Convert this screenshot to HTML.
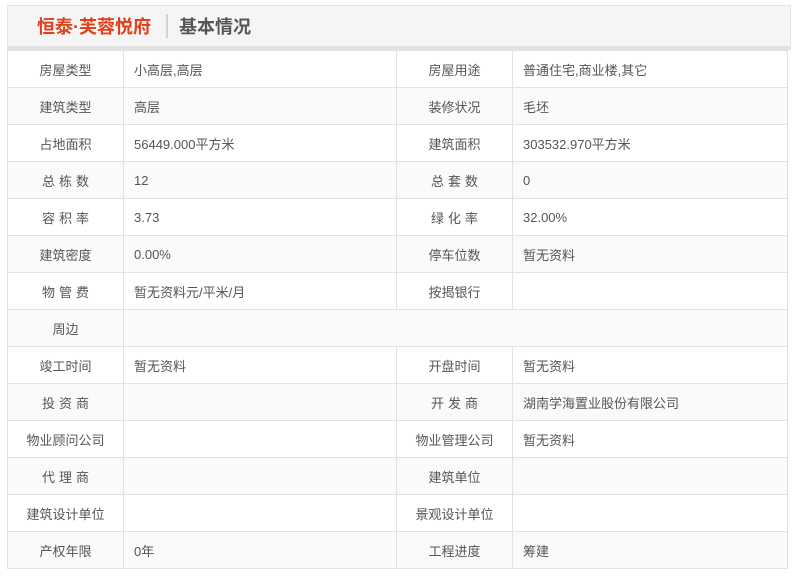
<!DOCTYPE html>
<html><head><meta charset="utf-8"><style>
*{margin:0;padding:0;box-sizing:border-box}
body{width:793px;height:579px;background:#fff;font-family:"Liberation Sans","Noto Sans CJK SC","Microsoft YaHei",sans-serif;position:relative;overflow:hidden}
.hd{position:absolute;left:7px;top:5px;width:784px;height:45px;background:#f5f5f5;border:1px solid #e4e4e4;border-bottom:4px solid #e2e2e2}
.hd .t{position:absolute;left:29px;top:9px;font-size:18px;font-weight:bold;color:#e0401a;line-height:24px}
.hd .sep{position:absolute;left:158px;top:8px;width:2px;height:24px;background:#d4d4d4}
.hd .s{position:absolute;left:171px;top:9px;font-size:18px;font-weight:bold;color:#555;line-height:24px}
table{position:absolute;left:7px;top:50px;width:780px;border-collapse:collapse;table-layout:fixed}
td{height:37px;border:1px solid #e2e2e2;font-size:13px;color:#555;padding:0 10px;white-space:nowrap}
td.l{text-align:center;padding:0}
tr:nth-child(even) td{background:#fafafa}
.sp{letter-spacing:4px;padding-left:4px}
</style></head><body>
<div class="hd"><div class="t">恒泰·芙蓉悦府</div><div class="sep"></div><div class="s">基本情况</div></div>
<table>
<colgroup><col style="width:116px"><col style="width:273px"><col style="width:116px"><col style="width:275px"></colgroup>
<tr><td class="l">房屋类型</td><td>小高层,高层</td><td class="l">房屋用途</td><td>普通住宅,商业楼,其它</td></tr>
<tr><td class="l">建筑类型</td><td>高层</td><td class="l">装修状况</td><td>毛坯</td></tr>
<tr><td class="l">占地面积</td><td>56449.000平方米</td><td class="l">建筑面积</td><td>303532.970平方米</td></tr>
<tr><td class="l"><span class="sp">总栋数</span></td><td>12</td><td class="l"><span class="sp">总套数</span></td><td>0</td></tr>
<tr><td class="l"><span class="sp">容积率</span></td><td>3.73</td><td class="l"><span class="sp">绿化率</span></td><td>32.00%</td></tr>
<tr><td class="l">建筑密度</td><td>0.00%</td><td class="l">停车位数</td><td>暂无资料</td></tr>
<tr><td class="l"><span class="sp">物管费</span></td><td>暂无资料元/平米/月</td><td class="l">按揭银行</td><td></td></tr>
<tr><td class="l">周边</td><td colspan="3"></td></tr>
<tr><td class="l">竣工时间</td><td>暂无资料</td><td class="l">开盘时间</td><td>暂无资料</td></tr>
<tr><td class="l"><span class="sp">投资商</span></td><td></td><td class="l"><span class="sp">开发商</span></td><td>湖南学海置业股份有限公司</td></tr>
<tr><td class="l">物业顾问公司</td><td></td><td class="l">物业管理公司</td><td>暂无资料</td></tr>
<tr><td class="l"><span class="sp">代理商</span></td><td></td><td class="l">建筑单位</td><td></td></tr>
<tr><td class="l">建筑设计单位</td><td></td><td class="l">景观设计单位</td><td></td></tr>
<tr><td class="l">产权年限</td><td>0年</td><td class="l">工程进度</td><td>筹建</td></tr>
</table>
</body></html>
